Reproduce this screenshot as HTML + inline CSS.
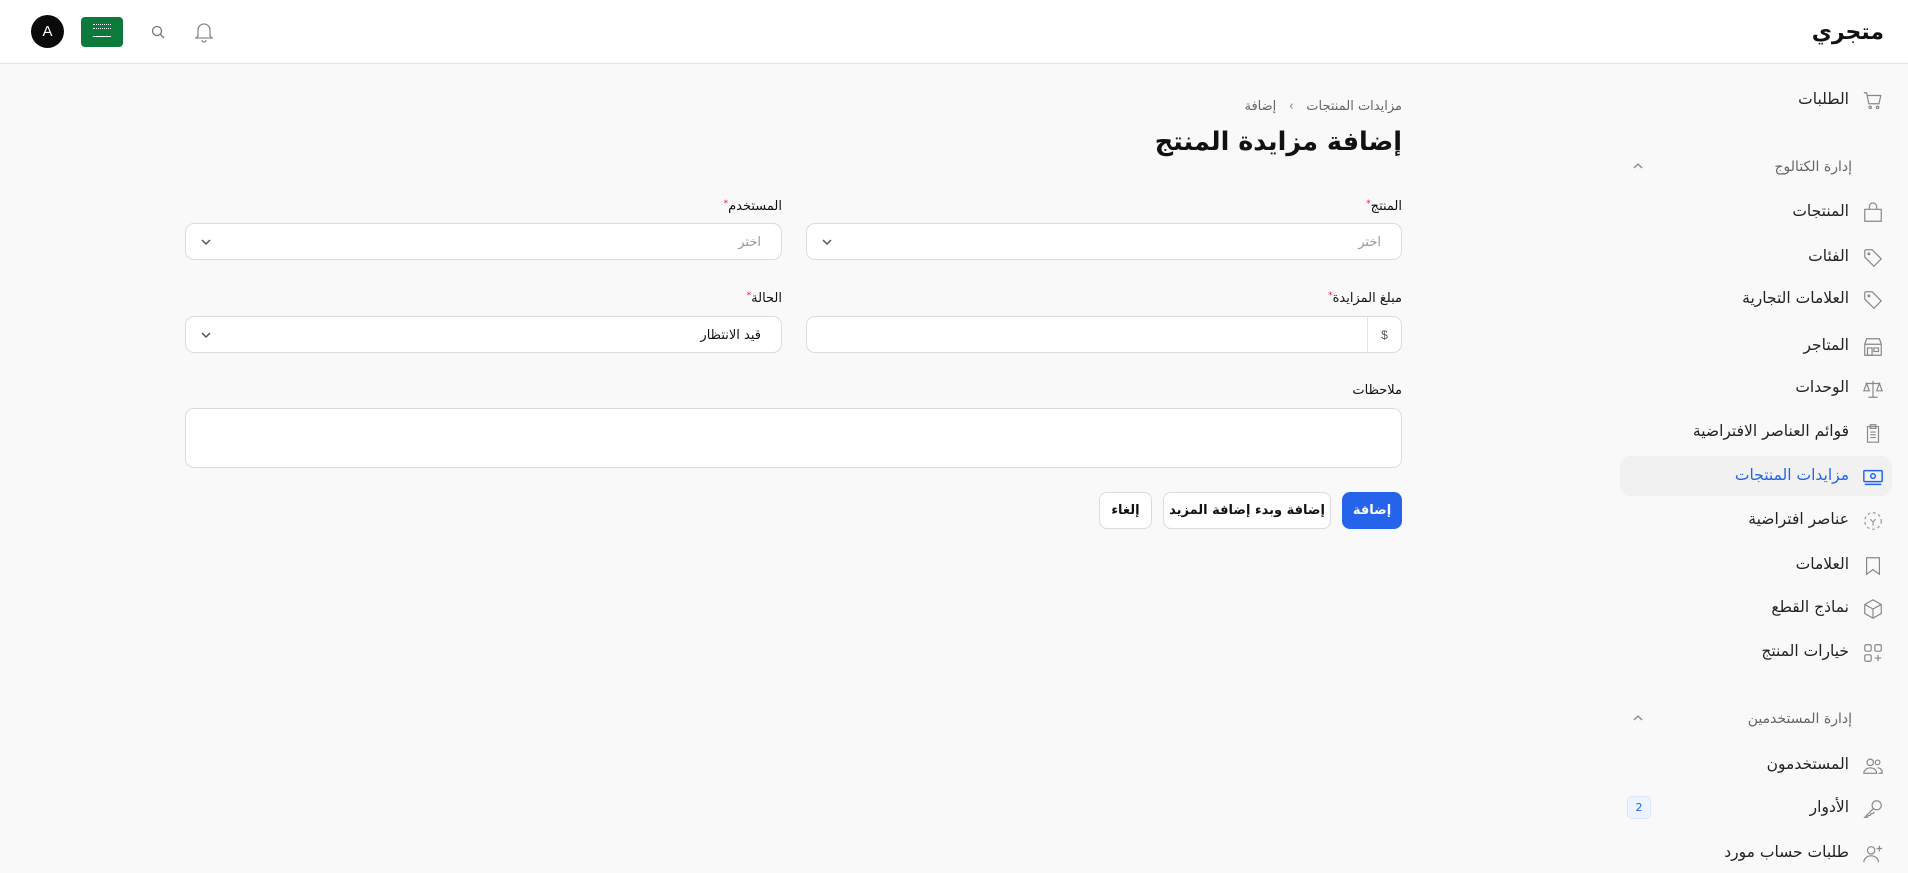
<!DOCTYPE html>
<html dir="rtl" lang="ar"><head><meta charset="utf-8">
<style>
*{box-sizing:border-box;margin:0;padding:0}
body{width:1908px;height:860px;overflow:hidden;background:#f9f9f9;font-family:"DejaVu Sans","Liberation Sans",sans-serif;color:#111;position:relative}
.hdr{position:absolute;left:0;top:0;width:1908px;height:64px;background:#fff;border-bottom:1px solid #e4e4e7}
.abs{position:absolute}
.side{position:absolute;right:0;top:64px;width:290px;height:796px}
.item{position:absolute;right:16px;width:272px;height:40px;display:flex;align-items:center;font-size:15.5px;color:#222;border-radius:10px}
.item svg{position:absolute;right:8px;top:10px}
.item span{position:absolute;right:43px;top:10px;white-space:nowrap}
.sec{position:absolute;right:56px;font-size:14px;color:#666}
.chev{position:absolute;left:14px}
.lbl{position:absolute;font-size:13px;color:#111;white-space:nowrap}
.lbl b{color:#e11d48;font-size:9px;vertical-align:top;font-weight:normal}
.inp{position:absolute;height:37px;background:#fff;border:1px solid #dcdcdf;border-radius:9px}
.ph{position:absolute;right:20px;top:11px;font-size:13px;color:#999}
.btn{position:absolute;top:492px;height:37px;border-radius:8px;font-size:13px;font-weight:bold;display:flex;align-items:center;justify-content:center;background:#fff;border:1px solid #dcdcdf}
</style></head><body>
<div class="hdr">
 <div class="abs" style="right:24px;top:20px;font-size:22px;font-weight:bold">متجري</div>
 <div class="abs" style="left:31px;top:15px;width:33px;height:33px;border-radius:50%;background:#0b0b0c;color:#fff;font-size:15px;display:flex;align-items:center;justify-content:center;font-family:'Liberation Sans',sans-serif">A</div>
 <div class="abs" style="left:81px;top:17px;width:42px;height:30px;border-radius:4px;background:#0b7a3a">
  <div class="abs" style="left:12px;top:7px;width:18px;height:5px;border-top:1px dotted #fff;border-bottom:1px dotted #fff"></div>
  <div class="abs" style="left:12px;top:19px;width:18px;height:1px;background:#fff"></div></div>
 <svg class="abs" style="left:151px;top:25px" width="14" height="14" viewBox="0 0 14 14" fill="none" stroke="#777" stroke-width="1.3"><circle cx="6" cy="6" r="4.5"/><path d="M9.5 9.5l3.5 3.5"/></svg>
 <svg class="abs" style="left:194px;top:21px" width="20" height="22" viewBox="0 0 20 22" fill="none" stroke="#888" stroke-width="1.3"><path d="M4 15V9a6 6 0 0 1 12 0v6l2 2H2z"/><path d="M8 19a2 2 0 0 0 4 0"/></svg>
</div>

<div class="side">
 <div class="item" style="top:16px"><svg width="22" height="22" viewBox="0 0 24 24" fill="none" stroke="#888" stroke-width="1.3"><path d="M2 3h3l2.5 12h11l2-9H6"/><circle cx="9" cy="19" r="1.3"/><circle cx="17" cy="19" r="1.3"/></svg><span>الطلبات</span></div>
 <div class="sec" style="top:95px">إدارة الكتالوج</div>
 <svg class="chev" style="top:98px" width="12" height="8" viewBox="0 0 12 8" fill="none" stroke="#888" stroke-width="1.3"><path d="M2 6l4-4 4 4"/></svg>
 <div class="item" style="top:128px"><svg width="22" height="22" viewBox="0 0 24 24" fill="none" stroke="#888" stroke-width="1.3"><path d="M3 8h18v13H3z"/><path d="M8 8V5a4 4 0 0 1 8 0v3"/></svg><span>المنتجات</span></div>
 <div class="item" style="top:173px"><svg width="22" height="22" viewBox="0 0 24 24" fill="none" stroke="#888" stroke-width="1.3"><path d="M3 4v7l10 10 8-8L11 3H4z"/><circle cx="7.5" cy="7.5" r="1"/></svg><span>الفئات</span></div>
 <div class="item" style="top:215px"><svg width="22" height="22" viewBox="0 0 24 24" fill="none" stroke="#888" stroke-width="1.3"><path d="M3 4v7l10 10 8-8L11 3H4z"/><circle cx="7.5" cy="7.5" r="1"/></svg><span>العلامات التجارية</span></div>
 <div class="item" style="top:262px"><svg width="22" height="22" viewBox="0 0 24 24" fill="none" stroke="#888" stroke-width="1.3"><path d="M3 9l2-6h14l2 6v12H3z"/><path d="M3 9h18M6 13h5v8H6zM13 13h5v4h-5z"/></svg><span>المتاجر</span></div>
 <div class="item" style="top:304px"><svg width="22" height="22" viewBox="0 0 24 24" fill="none" stroke="#888" stroke-width="1.3"><path d="M12 3v18M7 21h10M4 6h16M5 6l-3 8h6zM19 6l-3 8h6z"/></svg><span>الوحدات</span></div>
 <div class="item" style="top:348px"><svg width="22" height="22" viewBox="0 0 24 24" fill="none" stroke="#888" stroke-width="1.3"><path d="M6 5h12v17H6zM9 3h6v4H9zM9 11h6M9 14h6M9 17h6"/></svg><span>قوائم العناصر الافتراضية</span></div>
 <div class="item" style="top:392px;background:#f1f1f2;color:#2563eb"><svg width="22" height="22" viewBox="0 0 24 24" fill="none" stroke="#2563eb" stroke-width="1.6"><rect x="2" y="5" width="20" height="12" rx="1"/><circle cx="12" cy="11" r="2.5"/><path d="M3 20h18"/></svg><span>مزايدات المنتجات</span></div>
 <div class="item" style="top:436px"><svg width="22" height="22" viewBox="0 0 24 24" fill="none" stroke="#999" stroke-width="1.3" stroke-dasharray="3 3"><circle cx="12" cy="12" r="9"/><path d="M9 10l3 3 3-3M12 13v4" stroke-dasharray="none"/></svg><span>عناصر افتراضية</span></div>
 <div class="item" style="top:481px"><svg width="22" height="22" viewBox="0 0 24 24" fill="none" stroke="#888" stroke-width="1.3"><path d="M5 3h14v18l-7-5-7 5z"/></svg><span>العلامات</span></div>
 <div class="item" style="top:524px"><svg width="22" height="22" viewBox="0 0 24 24" fill="none" stroke="#888" stroke-width="1.3"><path d="M12 2l9 5v10l-9 5-9-5V7zM3 7l9 5 9-5M12 12v10"/></svg><span>نماذج القطع</span></div>
 <div class="item" style="top:568px"><svg width="22" height="22" viewBox="0 0 24 24" fill="none" stroke="#888" stroke-width="1.3"><rect x="3" y="3" width="7" height="7" rx="1.5"/><rect x="14" y="3" width="7" height="7" rx="1.5"/><rect x="3" y="14" width="7" height="7" rx="1.5"/><path d="M17.5 14v7M14 17.5h7"/></svg><span>خيارات المنتج</span></div>
 <div class="sec" style="top:647px">إدارة المستخدمين</div>
 <svg class="chev" style="top:650px" width="12" height="8" viewBox="0 0 12 8" fill="none" stroke="#888" stroke-width="1.3"><path d="M2 6l4-4 4 4"/></svg>
 <div class="item" style="top:681px"><svg width="22" height="22" viewBox="0 0 24 24" fill="none" stroke="#888" stroke-width="1.3"><circle cx="9" cy="8" r="3.5"/><path d="M2 20a7 6 0 0 1 14 0z"/><circle cx="17" cy="8" r="2.5"/><path d="M17 14a5 5 0 0 1 5 6h-4"/></svg><span>المستخدمون</span></div>
 <div class="item" style="top:724px"><svg width="22" height="22" viewBox="0 0 24 24" fill="none" stroke="#888" stroke-width="1.3"><circle cx="16" cy="8" r="5"/><path d="M12.5 11.5L3 21h3l1-2h2l1-2h2l1.5-2"/></svg><span>الأدوار</span></div>
 <div class="abs" style="left:9px;top:732px;width:24px;height:23px;border-radius:5px;background:#eef4ff;border:1px solid #dbe6fb;color:#2563eb;font-size:11px;display:flex;align-items:center;justify-content:center">2</div>
 <div class="item" style="top:769px"><svg width="22" height="22" viewBox="0 0 24 24" fill="none" stroke="#888" stroke-width="1.3"><circle cx="10" cy="8" r="4"/><path d="M2 21a8 7 0 0 1 16 0M19 3v6M16 6h6"/></svg><span>طلبات حساب مورد</span></div>
</div>

<div class="abs" style="right:506px;top:99px;font-size:13px;color:#666;white-space:nowrap">مزايدات المنتجات &nbsp;&nbsp;<span style="color:#888">›</span>&nbsp;&nbsp; إضافة</div>
<div class="abs" style="right:506px;top:127px;font-size:25.5px;font-weight:bold;white-space:nowrap">إضافة مزايدة المنتج</div>

<div class="lbl" style="right:506px;top:199px">المنتج<b>*</b></div>
<div class="inp" style="left:806px;top:223px;width:596px"><div class="ph">اختر</div><svg class="abs" style="left:14px;top:14px" width="12" height="8" viewBox="0 0 12 8" fill="none" stroke="#555" stroke-width="1.5"><path d="M2 2l4 4 4-4"/></svg></div>
<div class="lbl" style="right:1126px;top:199px">المستخدم<b>*</b></div>
<div class="inp" style="left:185px;top:223px;width:597px"><div class="ph">اختر</div><svg class="abs" style="left:14px;top:14px" width="12" height="8" viewBox="0 0 12 8" fill="none" stroke="#555" stroke-width="1.5"><path d="M2 2l4 4 4-4"/></svg></div>

<div class="lbl" style="right:506px;top:291px">مبلغ المزايدة<b>*</b></div>
<div class="inp" style="left:806px;top:316px;width:596px"><div class="abs" style="right:0;top:0;width:34px;height:35px;border-left:1px solid #e4e4e7;font-size:12px;color:#555;display:flex;align-items:center;justify-content:center;font-family:'Liberation Sans',sans-serif">$</div></div>
<div class="lbl" style="right:1126px;top:291px">الحالة<b>*</b></div>
<div class="inp" style="left:185px;top:316px;width:597px"><div class="ph" style="color:#111">قيد الانتظار</div><svg class="abs" style="left:14px;top:14px" width="12" height="8" viewBox="0 0 12 8" fill="none" stroke="#555" stroke-width="1.5"><path d="M2 2l4 4 4-4"/></svg></div>

<div class="lbl" style="right:506px;top:383px">ملاحظات</div>
<div class="inp" style="left:185px;top:408px;width:1217px;height:60px"></div>

<div class="btn" style="left:1342px;width:60px;background:#2563eb;border-color:#2563eb;color:#fff">إضافة</div>
<div class="btn" style="left:1163px;width:168px">إضافة وبدء إضافة المزيد</div>
<div class="btn" style="left:1099px;width:53px">إلغاء</div>
</body></html>
